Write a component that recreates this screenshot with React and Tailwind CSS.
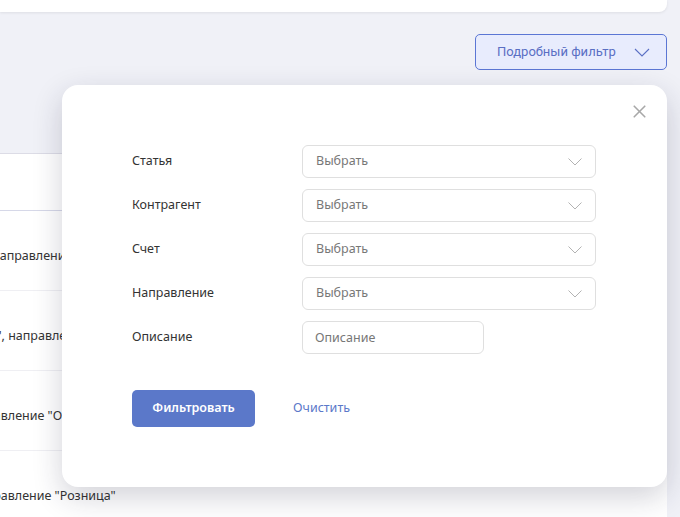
import { X } from 'lucide-react'

// Operations list with the detailed filter popover opened over it.

const FIELDS = [
  { key: 'article', label: 'Статья' },
  { key: 'counterparty', label: 'Контрагент' },
  { key: 'account', label: 'Счет' },
  { key: 'direction', label: 'Направление' },
]

const ROWS = [
  { id: 1, text: 'направление "Опт"', shift: 'ml-[-8px]' },
  { id: 2, text: 'Контрагент "Вектор", направление "Опт"', shift: 'ml-[-123px]' },
  { id: 3, text: 'направление "Опт"', shift: 'ml-[-36px]' },
  { id: 4, text: 'направление "Розница"', shift: 'ml-[-29px]' },
]

function Chevron({ className }) {
  return (
    <svg width="16" height="9" viewBox="0 0 16 9" fill="none" className={className}>
      <polyline points="1,1 8,8 15,1" stroke="currentColor" strokeWidth="1.1" />
    </svg>
  )
}

export default function App() {
  return (
    <div className="relative h-[517px] w-[680px] overflow-hidden bg-[#f0f1f7] font-['Noto_Sans',sans-serif] text-[12.5px] text-[#333]">
      {/* Summary card, scrolled mostly out of view */}
      <div className="mr-[13px] h-3 rounded-br-lg bg-white shadow-[0_1px_3px_rgba(0,0,0,0.08)]" />

      <div className="mr-[13px] mt-[22px] flex justify-end">
        <button className="flex h-9 w-[192px] items-center justify-between rounded-[5px] border border-[#5b76d4] bg-[#e8ecfd] pl-[21px] pr-[16px] font-['Roboto',sans-serif] text-[13px] text-[#5a6fc4]">
          Подробный фильтр
          <Chevron className="text-[#5a6fc4]" />
        </button>
      </div>

      {/* Operations table */}
      <div className="mr-[13px] mt-[83px] bg-white">
        <div className="h-[58px] border-y border-t-[#dcdce6] border-b-[#d6d8e8]" />
        {ROWS.map(row => (
          <div key={row.id} className="flex h-[80px] items-end overflow-hidden border-b border-[#efeff3] pb-[24px] whitespace-nowrap">
            <span className={row.shift}>{row.text}</span>
          </div>
        ))}
      </div>

      <FilterPopover />
    </div>
  )
}

function FilterPopover() {
  return (
    <div className="absolute left-[62px] top-[85px] h-[402px] w-[605px] rounded-2xl bg-white pl-[70px] pt-[60px] shadow-[0_10px_30px_rgba(30,30,60,0.2)]">
      <button className="absolute right-[17px] top-[16px] text-[#a8a8a8]">
        <X size={21} strokeWidth={1.9} />
      </button>

      <div className="flex flex-col gap-[11px]">
        {FIELDS.map(f => (
          <div key={f.key} className="flex items-center">
            <label className="w-[170px] text-[#333]">{f.label}</label>
            <div className="flex h-[33px] w-[294px] items-center justify-between rounded-md border border-[#dfdfdf] pl-[13px] pr-[13px] text-[#777]">
              Выбрать
              <svg width="14" height="8" viewBox="0 0 14 8" fill="none" className="text-[#b3b3b3]">
                <polyline points="0.5,0.5 7,7 13.5,0.5" stroke="currentColor" strokeWidth="1" />
              </svg>
            </div>
          </div>
        ))}
        <div className="flex items-center">
          <label className="w-[170px] text-[#333]">Описание</label>
          <input
            placeholder="Описание"
            className="h-[33px] w-[182px] rounded-md border border-[#dfdfdf] px-[12px] text-[12.5px] text-[#333] placeholder:text-[#777] focus:outline-none"
          />
        </div>
      </div>

      <div className="mt-[36px] flex items-center">
        <button className="h-[37px] w-[123px] rounded-[5px] bg-[#5b78c9] font-semibold text-white">Фильтровать</button>
        <button className="ml-[38px] text-[#5b78c9]">Очистить</button>
      </div>
    </div>
  )
}
